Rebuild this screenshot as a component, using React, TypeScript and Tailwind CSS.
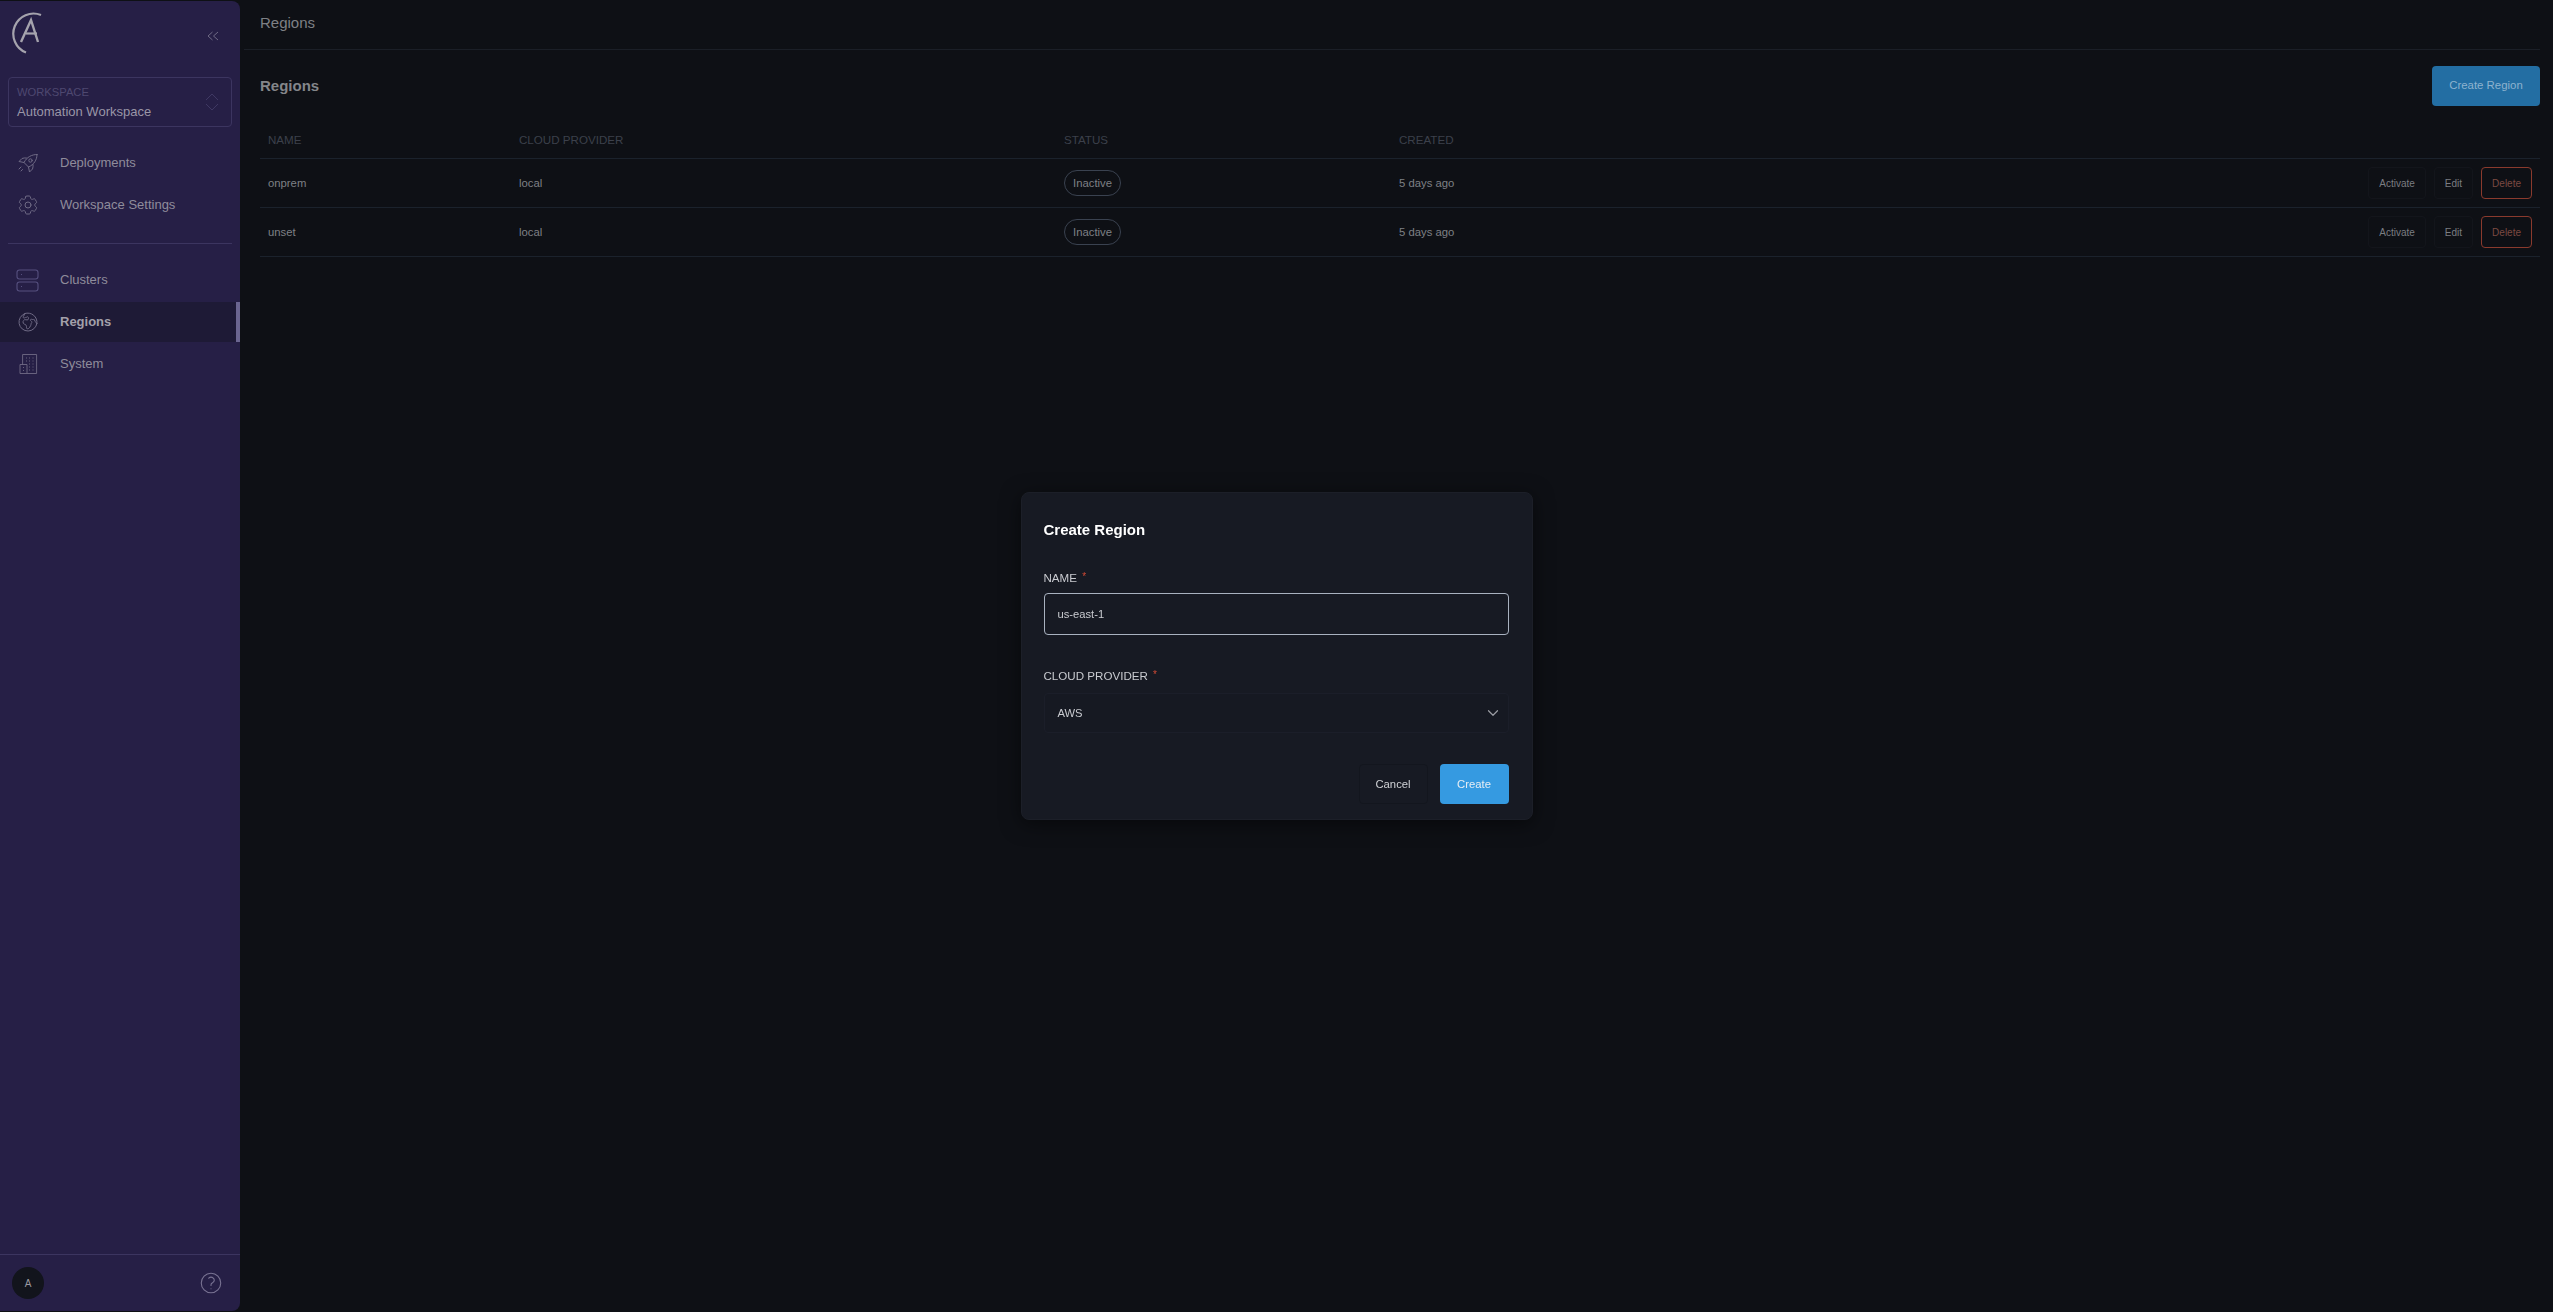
import { ChevronDown } from "lucide-react";
import {
  HiOutlineCog6Tooth,
  HiOutlineGlobeEuropeAfrica,
  HiOutlineQuestionMarkCircle,
} from "react-icons/hi2";
import type { ComponentType } from "react";

type IconProps = { className?: string; size?: number; strokeWidth?: number };

function RocketIcon({ className, size = 24 }: IconProps) {
  return (
    <svg className={className} width={size} height={size} viewBox="0 0 24 24" fill="none" stroke="currentColor" strokeWidth="1" strokeLinejoin="round" strokeLinecap="round">
      <path d="M21 3.5c-5.5 0-10 2.5-13 8l4.5 4.5c5.5-2.5 8.5-7 8.5-12.5z" />
      <path d="M8 11.5 3 10.5l3-3c1.5-.6 3-.7 4.5-.5" />
      <path d="m12.5 16 1 5 3-3c.6-1.5.7-3 .5-4.5" />
      <circle cx="14.5" cy="9.5" r="1.7" />
      <path d="m5 16-2 2M6.5 18.5 5 20" />
    </svg>
  );
}

function ClustersIcon({ className, size = 28 }: IconProps) {
  return (
    <svg className={className} width={size} height={size} viewBox="0 0 28 28" fill="none" stroke="currentColor" strokeWidth="1.1">
      <rect x="3" y="4" width="21" height="9" rx="2.5" />
      <rect x="3" y="16" width="21" height="9" rx="2.5" />
      <path d="M7 8.5h1M7 20.5h1" />
    </svg>
  );
}

function SystemIcon({ className, size = 24 }: IconProps) {
  return (
    <svg className={className} width={size} height={size} viewBox="0 0 24 24" fill="none" stroke="currentColor" strokeWidth="0.9">
      <path d="M6.6 12.5V2.500h14v19H4v-9h7v9" />
      <path d="M10 6h1M13 6h1M16.5 6h1M10 9h1M13 9h1M16.5 9h1M13 12h1M16.5 12h1M13 15h1M16.5 15h1M13 18h1M16.5 18h1M7.5 15v1M7.5 18v1" />
    </svg>
  );
}

type NavEntry = { label: string; icon: ComponentType<IconProps>; muted?: boolean; active?: boolean };

const TOP_NAV: NavEntry[] = [
  { label: "Deployments", icon: RocketIcon },
  { label: "Workspace Settings", icon: HiOutlineCog6Tooth },
];

const BOTTOM_NAV: NavEntry[] = [
  { label: "Clusters", icon: ClustersIcon, muted: true },
  { label: "Regions", icon: HiOutlineGlobeEuropeAfrica, active: true },
  { label: "System", icon: SystemIcon },
];

const REGIONS = [
  { name: "onprem", cloud: "local", status: "Inactive", created: "5 days ago" },
  { name: "unset", cloud: "local", status: "Inactive", created: "5 days ago" },
];

function NavItem({ item }: { item: NavEntry }) {
  const Icon = item.icon;
  return (
    <div className={`relative flex h-10 items-center ${item.active ? "bg-[#1e1a36] font-bold text-[#a3a0aa]" : "text-[#8f8c9b]"}`}>
      <div className="flex w-[60px] justify-center pr-1">
        <Icon className={item.muted ? "text-[#56507f]" : "text-[#6f6a85]"} size={item.muted ? 28 : 24} strokeWidth={1} />
      </div>
      <span className="text-[13px]">{item.label}</span>
      {item.active && <div className="absolute inset-y-0 right-0 w-1 bg-[#6b6590]" />}
    </div>
  );
}

function Logo() {
  return (
    <svg width="36" height="44" viewBox="0 0 36 44" fill="none" stroke="#a5a3ad" strokeWidth="2.2">
      <path d="M32 3A20 20 0 1 0 17 40.5" />
      <path d="M12 30 22 8l7 22" strokeWidth="2.4" />
      <path d="M17 21.5h11" />
    </svg>
  );
}

function Sidebar() {
  return (
    <aside className="mb-px mt-px flex w-[240px] shrink-0 flex-col rounded-r-lg bg-[#261f46]">
      <div className="flex h-[76px] items-start justify-between pl-[9px] pr-[21px] pt-[11px]">
        <Logo />
        <svg className="mt-[19px] text-[#6f6a85]" width="12" height="10" viewBox="0 0 12 10" fill="none" stroke="currentColor" strokeWidth="1">
          <path d="M5.5 1 1 5l4.5 4M11 1 6.5 5 11 9" />
        </svg>
      </div>
      <div className="mx-2 flex h-[50px] items-center justify-between rounded border border-[#3c3560] pl-2 pr-3">
        <div>
          <div className="text-[11.2px] leading-4 text-[#4e4870]">WORKSPACE</div>
          <div className="mt-1 text-[13px] leading-4 text-[#9a96a6]">Automation Workspace</div>
        </div>
        <svg className="text-[#3f3863]" width="14" height="18" viewBox="0 0 14 18" fill="none" stroke="currentColor" strokeWidth="1">
          <path d="M1 7 7 1l6 6M1 11l6 6 6-6" />
        </svg>
      </div>
      <nav className="mt-4 flex flex-col gap-[2px]">
        {TOP_NAV.map((item) => (
          <NavItem key={item.label} item={item} />
        ))}
      </nav>
      <div className="mx-2 mt-[18px] h-px bg-[#3c3560]" />
      <nav className="mt-4 flex flex-col gap-[2px]">
        {BOTTOM_NAV.map((item) => (
          <NavItem key={item.label} item={item} />
        ))}
      </nav>
      <div className="mt-auto flex h-[57px] items-center justify-between border-t border-[#3c3560] pl-3 pr-4">
        <div className="flex h-8 w-8 items-center justify-center rounded-full bg-[#12141c] text-[10px] text-[#9a9aa0]">A</div>
        <HiOutlineQuestionMarkCircle className="text-[#7a7494]" size={26} strokeWidth={1} />
      </div>
    </aside>
  );
}

function RowButton({ label, danger }: { label: string; danger?: boolean }) {
  return (
    <div className={`flex h-8 items-center rounded border px-[10px] text-[10px] ${danger ? "border-[#8a3a2d] text-[#7c4a42]" : "border-[#13151b] text-[#7b7d82]"}`}>
      {label}
    </div>
  );
}

function RegionsTable() {
  return (
    <div className="mt-5 text-[11.3px]">
      <div className="grid h-[33px] grid-cols-[251px_545px_335px_1fr] items-center border-b border-[#1b222c] pb-1 text-[11.6px] text-[#3c404b]">
        <div className="pl-2">NAME</div>
        <div className="pl-2">CLOUD PROVIDER</div>
        <div className="pl-2">STATUS</div>
        <div className="pl-2">CREATED</div>
      </div>
      {REGIONS.map((r) => (
        <div key={r.name} className="grid h-[49px] grid-cols-[251px_545px_335px_1fr] items-center border-b border-[#1b222c] text-[#7e8085]">
          <div className="pl-2">{r.name}</div>
          <div className="pl-2">{r.cloud}</div>
          <div className="pl-2">
            <span className="inline-flex h-[26px] w-[57px] items-center justify-center rounded-full border border-[#3a4250]">{r.status}</span>
          </div>
          <div className="flex items-center justify-between pl-2 pr-2">
            <span>{r.created}</span>
            <div className="flex gap-2">
              <RowButton label="Activate" />
              <RowButton label="Edit" />
              <RowButton label="Delete" danger />
            </div>
          </div>
        </div>
      ))}
    </div>
  );
}

function CreateRegionDialog() {
  return (
    <div className="fixed inset-0 flex items-center justify-center">
      <div className="h-[328px] w-[512px] rounded-lg border border-[#1c1f28] bg-[#171a23] pl-[22px] pr-[23px] pt-[27px] shadow-[0_4px_20px_rgba(0,0,0,0.5)]">
        <h2 className="text-[15px] font-bold leading-5 text-white">Create Region</h2>
        <label className="mt-[30px] block text-[11.6px] leading-4 text-[#c9cbd0]">
          NAME <span className="relative -top-[2px] ml-[2px] text-[10px] text-[#d04a35]">*</span>
        </label>
        <div className="mt-[6px] flex h-[42px] items-center rounded border border-[#a9b2c0] px-[13px] text-[11.2px] text-[#c9cbd0]">us-east-1</div>
        <label className="mt-[33px] block text-[11.6px] leading-4 text-[#c9cbd0]">
          CLOUD PROVIDER <span className="relative -top-[2px] ml-[2px] text-[10px] text-[#d04a35]">*</span>
        </label>
        <div className="mt-[8px] flex h-10 items-center justify-between rounded border border-[#1b1e29] bg-[#161922] pl-[13px] pr-[6px] text-[11.2px] text-[#c9cbd0]">
          AWS
          <ChevronDown className="text-[#9a9ca3]" size={18} strokeWidth={1.6} />
        </div>
        <div className="mt-[31px] flex justify-end gap-3">
          <div className="flex h-10 w-[69px] items-center justify-center rounded border border-[#13161e] text-[11.3px] text-[#d0d2d6]">Cancel</div>
          <div className="flex h-10 w-[69px] items-center justify-center rounded bg-[#359ae1] text-[11.3px] text-[#e6eef5]">Create</div>
        </div>
      </div>
    </div>
  );
}

export default function App() {
  return (
    <div className="flex h-[1312px] overflow-hidden bg-[#0e1015] font-['Liberation_Sans',Arial,sans-serif]">
      <Sidebar />
      <main className="min-w-0 flex-1 pl-1 pr-[13px]">
        <header className="flex h-[50px] items-center border-b border-[#1b1f27] pb-[2px] pl-4 text-[15px] text-[#7e8085]">Regions</header>
        <div className="pl-4">
          <div className="mt-4 flex h-10 items-center justify-between">
            <h1 className="text-[15px] font-bold text-[#84868a]">Regions</h1>
            <div className="flex h-10 w-[108px] items-center justify-center rounded bg-[#236ea3] text-[11.4px] text-[#8db3cf]">Create Region</div>
          </div>
          <RegionsTable />
        </div>
      </main>
      <CreateRegionDialog />
    </div>
  );
}
